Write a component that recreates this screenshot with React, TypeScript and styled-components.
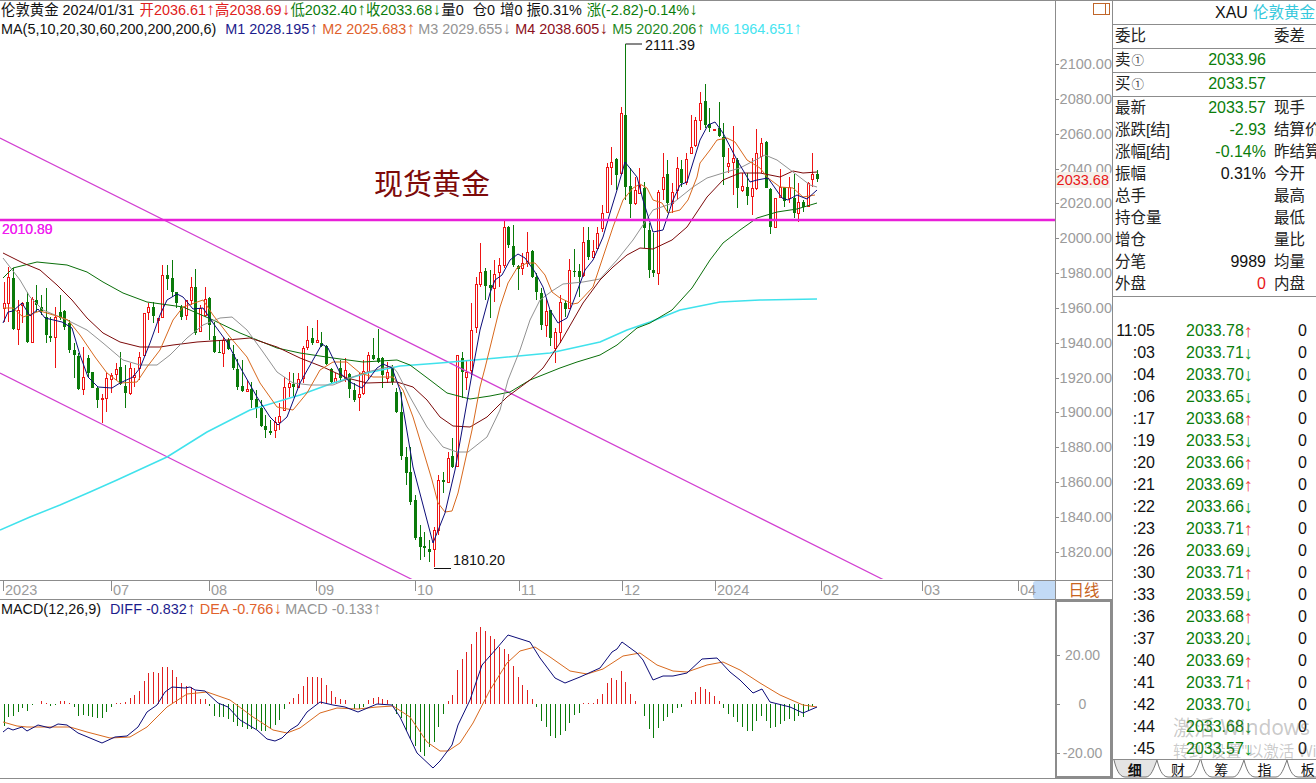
import styled, { createGlobalStyle } from 'styled-components';

const GRID = '#8c8c8c';
const RED = '#e81818';
const GREEN = '#0b7d0b';
const AXIS_TEXT = '#9b9b9b';

const GlobalStyle = createGlobalStyle`
    html, body {
        margin: 0;
        padding: 0;
        background: #fff;
        overflow: hidden;
    }
    body {
        font-family: 'Liberation Sans', 'Noto Sans CJK SC', sans-serif;
        color: #111;
    }
`;

// [type, wick top, body top, body bottom, wick bottom]
type Candle = [string, number, number, number, number];

const CANDLES: Candle[] = [
    ['r', 282, 303, 308, 322], ['r', 267, 277, 303, 322], ['g', 268, 278, 329, 330], ['r', 300, 310, 329, 345], ['r', 302, 303, 305, 323],
    ['g', 292, 302, 342, 343], ['r', 297, 299, 342, 342], ['g', 285, 300, 305, 312], ['g', 295, 307, 311, 315], ['g', 288, 317, 335, 343],
    ['g', 317, 336, 338, 342], ['r', 307, 317, 337, 368], ['g', 295, 312, 318, 320], ['g', 310, 311, 327, 330], ['g', 320, 323, 350, 353],
    ['g', 343, 350, 355, 378], ['g', 353, 356, 389, 390], ['r', 347, 377, 389, 395], ['g', 355, 358, 373, 377], ['g', 372, 372, 388, 388],
    ['g', 387, 388, 400, 408], ['r', 394, 398, 399, 423], ['r', 373, 378, 398, 412], ['r', 373, 375, 379, 393], ['r', 363, 369, 374, 380],
    ['g', 352, 367, 384, 385], ['g', 365, 386, 393, 408], ['r', 363, 368, 393, 395], ['r', 368, 375, 377, 387], ['r', 352, 357, 368, 380],
    ['r', 313, 313, 355, 355], ['r', 303, 307, 312, 320], ['g', 302, 307, 316, 323], ['r', 318, 318, 320, 333], ['r', 265, 275, 317, 318],
    ['g', 265, 275, 279, 290], ['g', 260, 278, 292, 297], ['g', 292, 292, 303, 308], ['g', 305, 307, 317, 320], ['r', 300, 300, 315, 320],
    ['r', 277, 287, 300, 305], ['g', 269, 287, 333, 335], ['r', 305, 308, 331, 332], ['r', 287, 299, 315, 317], ['g', 297, 298, 325, 340],
    ['g', 322, 336, 352, 353], ['g', 340, 352, 353, 353], ['r', 337, 340, 353, 367], ['g', 338, 340, 349, 350], ['g', 345, 354, 368, 370],
    ['g', 359, 369, 387, 390], ['g', 360, 386, 391, 392], ['r', 380, 389, 391, 392], ['g', 382, 389, 400, 408], ['g', 390, 399, 408, 418],
    ['g', 400, 408, 426, 427], ['g', 415, 426, 430, 438], ['g', 420, 431, 433, 435], ['r', 417, 422, 430, 438], ['r', 403, 416, 422, 430],
    ['r', 377, 387, 410, 410], ['r', 372, 383, 387, 397], ['g', 373, 384, 387, 397], ['r', 373, 379, 387, 388], ['r', 346, 348, 378, 383],
    ['r', 326, 340, 347, 350], ['g', 328, 338, 343, 345], ['r', 320, 340, 342, 343], ['g', 332, 343, 346, 347], ['g', 345, 346, 364, 365],
    ['g', 368, 369, 382, 383], ['r', 373, 378, 382, 383], ['g', 360, 368, 378, 382], ['r', 358, 370, 378, 382], ['g', 373, 374, 389, 398],
    ['g', 383, 390, 400, 402], ['r', 373, 394, 397, 411], ['r', 360, 371, 393, 395], ['r', 352, 355, 371, 380], ['g', 338, 355, 359, 360],
    ['g', 329, 358, 362, 363], ['g', 357, 358, 375, 388], ['r', 362, 372, 378, 383], ['g', 365, 368, 382, 385], ['g', 388, 392, 412, 413],
    ['g', 392, 412, 456, 460], ['g', 447, 457, 473, 485], ['g', 447, 472, 502, 505], ['g', 495, 500, 538, 540], ['g', 525, 537, 547, 560],
    ['g', 532, 546, 548, 557], ['g', 540, 549, 552, 562], ['r', 527, 530, 549, 567], ['r', 475, 480, 530, 535], ['g', 472, 480, 482, 493],
    ['r', 452, 458, 482, 483], ['g', 438, 456, 467, 468], ['r', 355, 355, 466, 466], ['g', 352, 358, 372, 398], ['r', 360, 372, 377, 390],
    ['r', 303, 330, 370, 375], ['r', 277, 284, 327, 333], ['r', 243, 272, 284, 287], ['g', 268, 271, 286, 300], ['g', 270, 285, 288, 318],
    ['r', 260, 274, 288, 302], ['r', 258, 265, 272, 287], ['r', 220, 227, 265, 268], ['g', 226, 227, 245, 248], ['g', 225, 246, 265, 267],
    ['g', 265, 266, 269, 290], ['r', 253, 263, 268, 275], ['r', 232, 252, 263, 267], ['g', 250, 251, 277, 278], ['g', 273, 277, 292, 300],
    ['g', 288, 293, 325, 330], ['r', 298, 311, 325, 337], ['g', 310, 310, 338, 346], ['r', 328, 332, 348, 363], ['r', 295, 302, 332, 343],
    ['g', 300, 303, 309, 317], ['r', 259, 270, 308, 308], ['g', 249, 271, 272, 277], ['g', 264, 271, 277, 297], ['r', 227, 242, 275, 277],
    ['g', 227, 240, 257, 260], ['r', 240, 251, 257, 258], ['r', 227, 233, 248, 248], ['r', 205, 213, 228, 232], ['r', 163, 167, 212, 213],
    ['r', 147, 162, 167, 185], ['g', 158, 159, 175, 190], ['r', 107, 113, 173, 175], ['g', 44, 115, 187, 200], ['g', 168, 186, 204, 218],
    ['r', 177, 190, 203, 205], ['r', 168, 185, 193, 193], ['g', 182, 188, 228, 248], ['g', 223, 230, 270, 278], ['g', 233, 270, 273, 277],
    ['r', 190, 192, 273, 285], ['r', 153, 177, 189, 200], ['g', 160, 174, 203, 213], ['r', 183, 192, 203, 213], ['r', 157, 168, 190, 200],
    ['g', 160, 169, 183, 187], ['r', 153, 159, 182, 185], ['r', 115, 147, 153, 153], ['r', 117, 120, 145, 147], ['r', 92, 103, 120, 130],
    ['g', 84, 101, 125, 128], ['g', 108, 124, 128, 132], ['r', 129, 129, 130, 130], ['g', 102, 128, 136, 137], ['g', 123, 137, 157, 185],
    ['r', 148, 163, 166, 173], ['r', 126, 158, 162, 195], ['g', 158, 160, 188, 208], ['r', 173, 186, 190, 192], ['g', 173, 187, 196, 205],
    ['r', 158, 188, 196, 215], ['r', 129, 153, 188, 190], ['r', 138, 143, 156, 173], ['g', 141, 142, 188, 188], ['g', 188, 189, 227, 234],
    ['r', 198, 198, 227, 227], ['r', 169, 187, 197, 197], ['g', 187, 187, 201, 207], ['r', 177, 187, 198, 203], ['g', 174, 198, 213, 218],
    ['r', 183, 202, 213, 222], ['g', 200, 202, 207, 212], ['r', 182, 183, 206, 207], ['r', 153, 174, 179, 187], ['g', 170, 174, 179, 182],
];

const MA_LINES = [
    {
        color: '#40e2ec',
        width: 1.5,
        points: '0,530 30,517 60,505 90,492 117,480 167,457 207,432 250,410 300,395 333,383 367,373 400,366 440,363 497,358 550,353 600,342 627,330 650,322 680,310 720,302 760,300 817,299',
    },
    {
        color: '#0a6f0a',
        width: 1,
        points: '3,278 13,268 37,262 67,265 87,272 103,282 123,293 147,302 183,307 213,320 240,333 277,348 300,353 333,358 363,362 397,360 410,365 430,380 447,393 470,399 490,396 510,392 530,380 560,368 577,362 600,355 617,345 637,328 650,323 672,310 692,288 710,260 723,243 740,230 757,218 777,212 797,209 817,203',
    },
    {
        color: '#7c0a0a',
        width: 1,
        points: '3,253 23,263 40,270 57,285 72,300 87,318 103,333 120,342 140,347 160,347 173,345 197,342 227,340 250,338 277,347 300,358 323,367 347,378 367,383 397,382 413,387 427,400 440,417 453,426 470,427 487,417 507,397 530,380 543,368 560,343 583,303 600,280 613,267 627,255 640,248 653,249 672,240 687,227 707,197 723,180 740,173 760,173 780,177 793,171 803,173 817,172',
    },
    {
        color: '#929292',
        width: 1,
        points: '3,258 20,280 30,297 43,310 67,320 87,330 103,343 123,360 140,365 157,365 170,355 187,338 203,325 220,318 232,317 247,330 263,352 277,372 293,383 310,385 333,385 350,378 367,372 392,366 397,372 410,397 427,427 443,447 457,452 468,452 487,437 500,410 508,380 520,350 530,320 540,300 552,291 563,284 583,282 600,279 617,260 633,240 653,210 673,203 693,187 707,178 723,173 740,168 765,155 777,160 793,172 810,185 817,187',
    },
    {
        color: '#d8691e',
        width: 1,
        points: '3,308 13,308 23,317 40,311 60,317 68,320 80,335 95,357 107,373 120,383 137,382 147,367 160,350 173,320 183,307 203,300 213,315 230,337 247,357 260,383 277,407 293,410 307,393 320,370 333,362 347,362 360,373 373,377 393,377 403,390 413,417 423,450 432,480 438,503 445,512 452,511 458,493 472,430 480,387 485,368 500,307 508,283 517,268 527,263 535,263 545,275 552,292 560,298 573,304 578,303 593,287 603,257 613,227 623,200 633,188 640,184 647,188 653,200 662,203 668,213 680,210 688,200 697,177 700,163 710,150 717,140 727,138 735,142 747,160 760,168 768,178 780,187 793,188 803,197 815,195',
    },
    {
        color: '#0c0c78',
        width: 1,
        points: '3,323 8,312 13,311 22,303 30,316 38,309 45,318 62,322 72,328 80,355 88,377 98,387 112,388 120,383 133,377 140,368 150,343 160,315 167,300 177,294 183,297 193,309 203,308 213,323 227,342 240,367 257,397 270,417 278,425 287,417 300,383 322,344 328,348 340,373 350,382 362,388 377,368 383,364 392,368 400,390 413,467 433,543 445,513 455,470 473,368 480,330 490,293 495,280 502,275 510,260 518,254 525,258 535,272 543,287 550,310 558,323 567,318 575,297 585,270 593,260 603,237 610,213 617,190 625,162 637,177 643,200 653,232 663,230 673,200 680,185 687,182 700,140 708,125 715,122 723,133 737,160 750,182 757,180 768,178 782,198 788,200 797,195 807,199 817,190',
    },
];

const MACD_BARS = [
    -67, -38, -35, -25, -12, -22, -3, 0, 8, 3,
    -5, -3, 10, 10, 3, -8, -35, -32, -35, -38,
    -42, -42, -25, -8, 3, 3, 5, 18, 27, 40,
    70, 92, 95, 92, 110, 112, 102, 82, 62, 55,
    52, 40, 15, 15, -5, -35, -40, -40, -45, -55,
    -65, -70, -75, -75, -75, -80, -82, -75, -62, -48,
    -15, 5, 18, 30, 55, 80, 82, 82, 78, 58,
    38, 22, 15, 12, 0, -15, -15, -10, 12, 18,
    22, 15, 12, -3, -30, -42, -80, -105, -125, -145,
    -155, -130, -115, -68,
    -30, 8, 28, 103, 135, 155, 180, 215, 230, 220,
    205, 195, 170, 165, 150, 115, 82, 58, 42, 15,
    -10, -50, -68, -95, -102, -92, -82, -58, -33, -28,
    2, 2, 3, 15, 30, 62, 78, 72, 100, 65,
    30, 10, 0, -35, -75, -102, -72, -50, -38, -28,
    -12, -8, 0, 12, 35, 50, 45, 35, 25, 10,
    -12, -30, -38, -55, -70, -80, -82, -52, -35, -50,
    -72, -68, -60, -52, -45, -50, -35, -40, -20, -5, 0,
];

const DIFF_LINE =
    '3,732 8,728 13,730 22,727 27,731 38,725 50,728 58,724 67,725 78,733 90,738 102,743 115,737 127,736 138,727 147,712 157,705 165,692 172,687 185,688 190,687 195,690 205,691 218,703 228,707 240,720 257,730 267,739 275,741 282,738 290,730 298,725 307,712 320,702 333,705 345,707 358,712 377,704 392,705 400,717 417,753 433,768 440,761 452,745 458,725 470,700 482,665 497,648 508,635 530,642 540,658 555,678 565,683 580,677 600,668 612,652 617,649 622,642 637,653 643,660 653,680 663,676 673,676 687,673 702,659 717,658 730,672 740,680 753,693 762,689 770,702 790,707 803,713 817,707';
const DEA_LINE =
    '3,722 17,726 27,727 43,727 70,727 87,732 110,738 130,737 147,727 167,707 187,694 207,692 230,700 253,717 273,730 287,733 300,728 320,713 337,708 358,709 377,707 393,706 410,717 427,742 440,751 448,751 460,743 473,723 490,690 507,663 520,651 535,647 550,657 570,671 587,674 603,669 623,656 640,653 657,665 673,671 687,672 707,665 723,662 740,670 760,683 780,695 803,705 817,707';

const candleX = (i: number) => Math.round(3.5 + 4.675 * i);

const PRICE_TICKS = ['2100.00', '2080.00', '2060.00', '2040.00', '2020.00', '2000.00', '1980.00', '1960.00', '1940.00', '1920.00', '1900.00', '1880.00', '1860.00', '1840.00', '1820.00'];

const TIME_TICKS = [
    { label: '2023', width: 108 },
    { label: '07', width: 98 },
    { label: '08', width: 107 },
    { label: '09', width: 99 },
    { label: '10', width: 104 },
    { label: '11', width: 103 },
    { label: '12', width: 93 },
    { label: '2024', width: 106 },
    { label: '02', width: 101 },
    { label: '03', width: 96 },
    { label: '04', width: 15 },
];

const QUOTE_ROWS = [
    { label: '最新', value: '2033.57', color: GREEN, side: '现手' },
    { label: '涨跌[结]', value: '-2.93', color: GREEN, side: '结算价' },
    { label: '涨幅[结]', value: '-0.14%', color: GREEN, side: '昨结算' },
    { label: '振幅', value: '0.31%', color: '#111', side: '今开' },
    { label: '总手', value: '', color: '#111', side: '最高' },
    { label: '持仓量', value: '', color: '#111', side: '最低' },
    { label: '增仓', value: '', color: '#111', side: '量比' },
    { label: '分笔', value: '9989', color: '#111', side: '均量' },
    { label: '外盘', value: '0', color: RED, side: '内盘' },
];

const TRADES: [string, string, boolean][] = [
    ['11:05', '2033.78', true], [':03', '2033.71', false], [':04', '2033.70', false], [':06', '2033.65', false],
    [':17', '2033.68', true], [':19', '2033.53', false], [':20', '2033.66', true], [':21', '2033.69', true],
    [':22', '2033.66', false], [':23', '2033.71', true], [':26', '2033.69', false], [':30', '2033.71', true],
    [':33', '2033.59', false], [':36', '2033.68', true], [':37', '2033.20', false], [':40', '2033.69', true],
    [':41', '2033.71', true], [':42', '2033.70', false], [':44', '2033.68', false], [':45', '2033.57', false],
];

const Page = styled.div`
    width: 1316px;
    height: 783px;
    display: flex;
    overflow: hidden;
    border-top: 1px solid ${GRID};
    box-sizing: border-box;
    font-size: 14.4px;
`;

const ChartColumn = styled.div`
    width: 1112px;
    flex: none;
    display: flex;
    flex-direction: column;
`;

const MainPane = styled.div`
    height: 579px;
    display: flex;
    flex: none;
    border-bottom: 1px solid ${GRID};
    box-sizing: content-box;
`;

const Canvas = styled.div`
    position: relative;
    width: 1055px;
    flex: none;
    overflow: hidden;
`;

const ChartSvg = styled.svg`
    display: block;
    width: 1055px;
`;

const MainSvg = styled(ChartSvg)`
    margin-top: -1px;
`;

const LegendStack = styled.div`
    position: absolute;
    left: 1px;
    top: 0;
    line-height: 19px;
    white-space: nowrap;
`;

const LegendRow = styled.div`
    display: flex;
    height: 19px;
`;

const LegendItem = styled.span<{ $color?: string; $left?: number }>`
    color: ${(p) => p.$color || '#111'};
    margin-left: ${(p) => p.$left || 0}px;
`;

const Arrow = styled.span`
    display: inline-block;
    width: 9px;
    text-align: center;
    font-size: 17px;
    line-height: 17px;
`;

const MarketTitle = styled.div`
    position: absolute;
    left: 374px;
    top: 160px;
    font-size: 29px;
    line-height: 42px;
    color: #7d0a0a;
    font-family: 'Noto Sans CJK SC', sans-serif;
`;

const LevelLabel = styled.div`
    position: absolute;
    left: 2px;
    top: 220px;
    color: #f01df0;
    font-size: 14px;
    line-height: 16px;
`;

const PriceAxis = styled.div`
    position: relative;
    flex: 1;
    border-left: 1px solid ${GRID};
    padding-top: 46px;
    box-sizing: border-box;
    color: ${AXIS_TEXT};
    font-size: 14.5px;
`;

const PriceTick = styled.div`
    height: 34.85px;
    line-height: 34.85px;
    text-align: right;
    position: relative;
    &::before {
        content: '';
        position: absolute;
        left: 0;
        top: 17px;
        width: 3px;
        height: 1px;
        background: ${GRID};
    }
`;

const LastPrice = styled.div`
    position: absolute;
    right: 2px;
    top: 171px;
    padding: 0 1px;
    height: 16px;
    line-height: 16px;
    color: ${RED};
    background: #f5f0ea;
`;

const WindowBox = styled.div`
    position: absolute;
    top: 2px;
    left: 37px;
    width: 15px;
    height: 10px;
    border: 1px solid #c0662a;
    display: flex;
    justify-content: flex-end;
    &::after {
        content: '';
        width: 3px;
        border-left: 1px solid #c0662a;
    }
`;

const TimeRow = styled.div`
    height: 18px;
    flex: none;
    display: flex;
    border-bottom: 1px solid ${GRID};
`;

const TimeTrack = styled.div`
    position: relative;
    width: 1055px;
    flex: none;
    display: flex;
    padding-left: 3px;
    box-sizing: border-box;
    color: ${AXIS_TEXT};
    font-size: 14.5px;
`;

const TimeTick = styled.div<{ $width: number }>`
    position: relative;
    z-index: 1;
    width: ${(p) => p.$width}px;
    flex: none;
    border-left: 1px solid ${GRID};
    height: 10px;
    line-height: 19px;
    padding-left: 1px;
    box-sizing: border-box;
    white-space: nowrap;
`;

const Cursor = styled.div`
    width: 22px;
    height: 18px;
    flex: none;
    background: #c2daf5;
    border-radius: 3px 0 0 3px;
`;

const PeriodLabel = styled.div`
    flex: 1;
    border-left: 1px solid ${GRID};
    text-align: center;
    color: #c8641e;
    font-size: 15.5px;
    line-height: 19px;
`;

const MacdPane = styled.div`
    height: 178px;
    flex: none;
    display: flex;
    border-bottom: 1px solid ${GRID};
`;

const MacdAxis = styled.div`
    flex: 1;
    border: 2px solid ${GRID};
    display: flex;
    flex-direction: column;
    padding-top: 29px;
    color: ${AXIS_TEXT};
    font-size: 14px;
    box-sizing: border-box;
`;

const MacdTick = styled.div`
    height: 49px;
    line-height: 49px;
    text-align: center;
    position: relative;
    padding-right: 2px;
    &::before {
        content: '';
        position: absolute;
        left: 0;
        top: 24px;
        width: 3px;
        height: 1px;
        background: ${GRID};
    }
`;

const SidePanel = styled.div`
    position: relative;
    flex: 1;
    min-width: 0;
    display: flex;
    flex-direction: column;
    border-left: 1px solid ${GRID};
    border-bottom: 1px solid ${GRID};
    height: 777px;
    overflow: hidden;
    font-size: 16px;
    white-space: nowrap;
`;

const SideTitle = styled.div`
    height: 23px;
    flex: none;
    display: flex;
    padding-left: 102px;
    gap: 5px;
    line-height: 23px;
    border-bottom: 1px solid ${GRID};
`;

const SideName = styled.span`
    color: #35c8dc;
    font-size: 15.5px;
`;

const BookRow = styled.div`
    height: 23px;
    flex: none;
    display: flex;
    line-height: 22px;
    border-bottom: 1px solid ${GRID};
`;

const QuoteRow = styled.div`
    height: 22px;
    flex: none;
    display: flex;
    line-height: 22px;
`;

const QuoteCell = styled.div`
    width: 153px;
    flex: none;
    padding: 0 0 0 2px;
    box-sizing: border-box;
    display: flex;
    justify-content: space-between;
`;

const CjkLabel = styled.span`
    font-size: 15.5px;
    color: #222;
`;

const Level = styled.span`
    font-size: 12.5px;
    color: #444;
    margin-left: 1px;
`;

const QuoteValue = styled.span<{ $color: string }>`
    color: ${(p) => p.$color};
`;

const SideLabel = styled(CjkLabel)`
    margin-left: 8px;
`;

const QuoteList = styled.div`
    flex: none;
    padding-bottom: 1px;
    border-bottom: 1px solid ${GRID};
`;

const TradeList = styled.div`
    flex: 1;
    padding-top: 23px;
    min-height: 0;
`;

const TradeRow = styled.div`
    height: 22px;
    display: flex;
    line-height: 22px;
`;

const TradeTime = styled.span`
    width: 42px;
    flex: none;
    text-align: right;
`;

const TradePrice = styled.span`
    margin-left: 31px;
    color: ${GREEN};
`;

const TradeArrow = styled.span<{ $up: boolean }>`
    color: ${(p) => (p.$up ? '#f04040' : '#0f9a2a')};
    width: 8px;
    text-align: center;
    flex: none;
    font-size: 18px;
`;

const TradeVolume = styled.span`
    width: 55px;
    flex: none;
    text-align: right;
`;

const TabBar = styled.div`
    height: 18px;
    flex: none;
    display: flex;
    border-top: 1px solid ${GRID};
`;

const Tab = styled.div<{ $active?: boolean }>`
    position: relative;
    width: 43.3px;
    flex: none;
    text-align: center;
    font-size: 14px;
    line-height: 18px;
    font-weight: ${(p) => (p.$active ? 700 : 400)};
    font-family: 'Noto Sans CJK SC', sans-serif;
`;

const TabText = styled.span`
    position: relative;
`;

const TabShape = styled.svg`
    position: absolute;
    left: 0;
    top: 0;
    width: 46px;
    height: 18px;
`;

const Watermark = styled.div<{ $top: number; $size: number }>`
    position: absolute;
    left: 60px;
    top: ${(p) => p.$top}px;
    font-size: ${(p) => p.$size}px;
    line-height: 1.2;
    color: rgba(90, 90, 90, 0.32);
    font-family: 'Noto Sans', 'Noto Sans CJK SC', sans-serif;
`;

function PriceChart() {
    return (
        <MainSvg viewBox="0 0 1055 579" height={579}>
            {CANDLES.map(([type, high, top, bottom, low], i) => {
                const x = candleX(i);
                const color = type === 'r' ? '#ee1414' : '#0a7a0a';
                return (
                    <g key={i} shapeRendering="crispEdges">
                        <line x1={x + 0.5} x2={x + 0.5} y1={high} y2={low} stroke={color} />
                        {type === 'r' ? (
                            <rect x={x - 0.5} y={top + 0.5} width={2} height={Math.max(bottom - top, 1)} fill="#fff" stroke={color} />
                        ) : (
                            <rect x={x - 1} y={top} width={3} height={Math.max(bottom - top, 1)} fill={color} />
                        )}
                    </g>
                );
            })}
            <line x1={0} y1={138} x2={884} y2={580} stroke="#d23fd2" strokeWidth={1.2} />
            <line x1={0} y1={373} x2={413} y2={580} stroke="#d23fd2" strokeWidth={1.2} />
            {MA_LINES.map((l) => (
                <polyline key={l.color} points={l.points} fill="none" stroke={l.color} strokeWidth={l.width} strokeLinejoin="round" />
            ))}
            <line x1={0} y1={220} x2={1055} y2={220} stroke="#e81fd8" strokeWidth={2.4} />
            <path d="M625.5 44H642" stroke="#111" fill="none" />
            <path d="M625.5 44V110" stroke="#0a7a0a" fill="none" />
            <path d="M434 568.5H451" stroke="#111" fill="none" />
            <text x={645} y={50} fontSize={14.4} fill="#111">2111.39</text>
            <text x={453} y={565} fontSize={14.4} fill="#111">1810.20</text>
        </MainSvg>
    );
}

function MacdChart() {
    const base = 704;
    return (
        <ChartSvg viewBox="0 600 1055 178" height={178}>
            <g shapeRendering="crispEdges">
                {MACD_BARS.map((v, i) => {
                    const x = candleX(i) + 0.5;
                    if (v === 0) return null;
                    return <line key={i} x1={x} x2={x} y1={base} y2={base - v / 3} stroke={v > 0 ? '#e02020' : '#0a7a0a'} />;
                })}
            </g>
            <polyline points={DEA_LINE} fill="none" stroke="#d8691e" />
            <polyline points={DIFF_LINE} fill="none" stroke="#0c0c78" />
        </ChartSvg>
    );
}

function MainLegend() {
    return (
        <LegendStack>
            <LegendRow>
                <LegendItem>伦敦黄金</LegendItem>
                <LegendItem $left={4}>2024/01/31</LegendItem>
                <LegendItem $color="#e02020" $left={5}>开2036.61<Arrow>↑</Arrow></LegendItem>
                <LegendItem $color="#e02020">高2038.69<Arrow>↓</Arrow></LegendItem>
                <LegendItem $color={GREEN}>低2032.40<Arrow>↑</Arrow></LegendItem>
                <LegendItem $color={GREEN}>收2033.68<Arrow>↓</Arrow></LegendItem>
                <LegendItem>量0</LegendItem>
                <LegendItem $left={9}>仓0</LegendItem>
                <LegendItem $left={5}>增0</LegendItem>
                <LegendItem $left={4}>振0.31%</LegendItem>
                <LegendItem $color={GREEN} $left={5}>涨(-2.82)-0.14%<Arrow>↓</Arrow></LegendItem>
            </LegendRow>
            <LegendRow>
                <LegendItem>MA(5,10,20,30,60,200,200,200,6)</LegendItem>
                <LegendItem $color="#1c1c8c" $left={9}>M1 2028.195<Arrow>↑</Arrow></LegendItem>
                <LegendItem $color="#e0622c" $left={4}>M2 2025.683<Arrow>↑</Arrow></LegendItem>
                <LegendItem $color="#949494" $left={3}>M3 2029.655<Arrow>↓</Arrow></LegendItem>
                <LegendItem $color="#8c1020" $left={4}>M4 2038.605<Arrow>↓</Arrow></LegendItem>
                <LegendItem $color="#1f8a1f" $left={4}>M5 2020.206<Arrow>↑</Arrow></LegendItem>
                <LegendItem $color="#46e4f0" $left={4}>M6 1964.651<Arrow>↑</Arrow></LegendItem>
            </LegendRow>
        </LegendStack>
    );
}

function SideQuotes() {
    return (
        <SidePanel>
            <SideTitle>
                XAU <SideName>伦敦黄金</SideName>
            </SideTitle>
            <BookRow>
                <QuoteCell>
                    <CjkLabel>委比</CjkLabel>
                </QuoteCell>
                <SideLabel>委差</SideLabel>
            </BookRow>
            <BookRow>
                <QuoteCell>
                    <CjkLabel>卖<Level>①</Level></CjkLabel>
                    <QuoteValue $color={GREEN}>2033.96</QuoteValue>
                </QuoteCell>
            </BookRow>
            <BookRow>
                <QuoteCell>
                    <CjkLabel>买<Level>①</Level></CjkLabel>
                    <QuoteValue $color={GREEN}>2033.57</QuoteValue>
                </QuoteCell>
            </BookRow>
            <QuoteList>
                {QUOTE_ROWS.map((r) => (
                    <QuoteRow key={r.label}>
                        <QuoteCell>
                            <CjkLabel>{r.label}</CjkLabel>
                            <QuoteValue $color={r.color}>{r.value}</QuoteValue>
                        </QuoteCell>
                        <SideLabel>{r.side}</SideLabel>
                    </QuoteRow>
                ))}
            </QuoteList>
            <TradeList>
                {TRADES.map(([time, price, up]) => (
                    <TradeRow key={time}>
                        <TradeTime>{time}</TradeTime>
                        <TradePrice>{price}</TradePrice>
                        <TradeArrow $up={up}>{up ? '↑' : '↓'}</TradeArrow>
                        <TradeVolume>0</TradeVolume>
                    </TradeRow>
                ))}
            </TradeList>
            <TabBar>
                {['细', '财', '筹', '指', '板'].map((t, i) => (
                    <Tab key={t} $active={i === 0}>
                        <TabShape viewBox="0 0 46 18">
                            <path d="M1 0C3 8 6 17 12 17H33C38 17 41 8 44 0" fill={i === 0 ? '#e4e4e4' : '#fff'} stroke="#777" />
                        </TabShape>
                        <TabText>{t}</TabText>
                    </Tab>
                ))}
            </TabBar>
            <Watermark $top={714} $size={21}>激活 Windows</Watermark>
            <Watermark $top={741} $size={15.5}>转到"设置"以激活 Windows。</Watermark>
        </SidePanel>
    );
}

export default function App() {
    return (
        <>
            <GlobalStyle />
            <Page>
                <ChartColumn>
                    <MainPane>
                        <Canvas>
                            <PriceChart />
                            <MainLegend />
                            <MarketTitle>现货黄金</MarketTitle>
                            <LevelLabel>2010.80</LevelLabel>
                            <LevelLabel>2010.89</LevelLabel>
                        </Canvas>
                        <PriceAxis>
                            <WindowBox />
                            {PRICE_TICKS.map((t) => (
                                <PriceTick key={t}>{t}</PriceTick>
                            ))}
                            <LastPrice>2033.68</LastPrice>
                        </PriceAxis>
                    </MainPane>
                    <TimeRow>
                        <TimeTrack>
                            {TIME_TICKS.map((t) => (
                                <TimeTick key={t.label} $width={t.width}>{t.label}</TimeTick>
                            ))}
                            <Cursor />
                        </TimeTrack>
                        <PeriodLabel>日线</PeriodLabel>
                    </TimeRow>
                    <MacdPane>
                        <Canvas>
                            <MacdChart />
                            <LegendStack>
                                <LegendRow>
                                    <LegendItem>MACD(12,26,9)</LegendItem>
                                    <LegendItem $color="#1c1c8c" $left={9}>DIFF -0.832<Arrow>↑</Arrow></LegendItem>
                                    <LegendItem $color="#e0622c" $left={4}>DEA -0.766<Arrow>↓</Arrow></LegendItem>
                                    <LegendItem $color="#949494" $left={3}>MACD -0.133<Arrow>↑</Arrow></LegendItem>
                                </LegendRow>
                            </LegendStack>
                        </Canvas>
                        <MacdAxis>
                            <MacdTick>20.00</MacdTick>
                            <MacdTick>0</MacdTick>
                            <MacdTick>-20.00</MacdTick>
                        </MacdAxis>
                    </MacdPane>
                </ChartColumn>
                <SideQuotes />
            </Page>
        </>
    );
}
